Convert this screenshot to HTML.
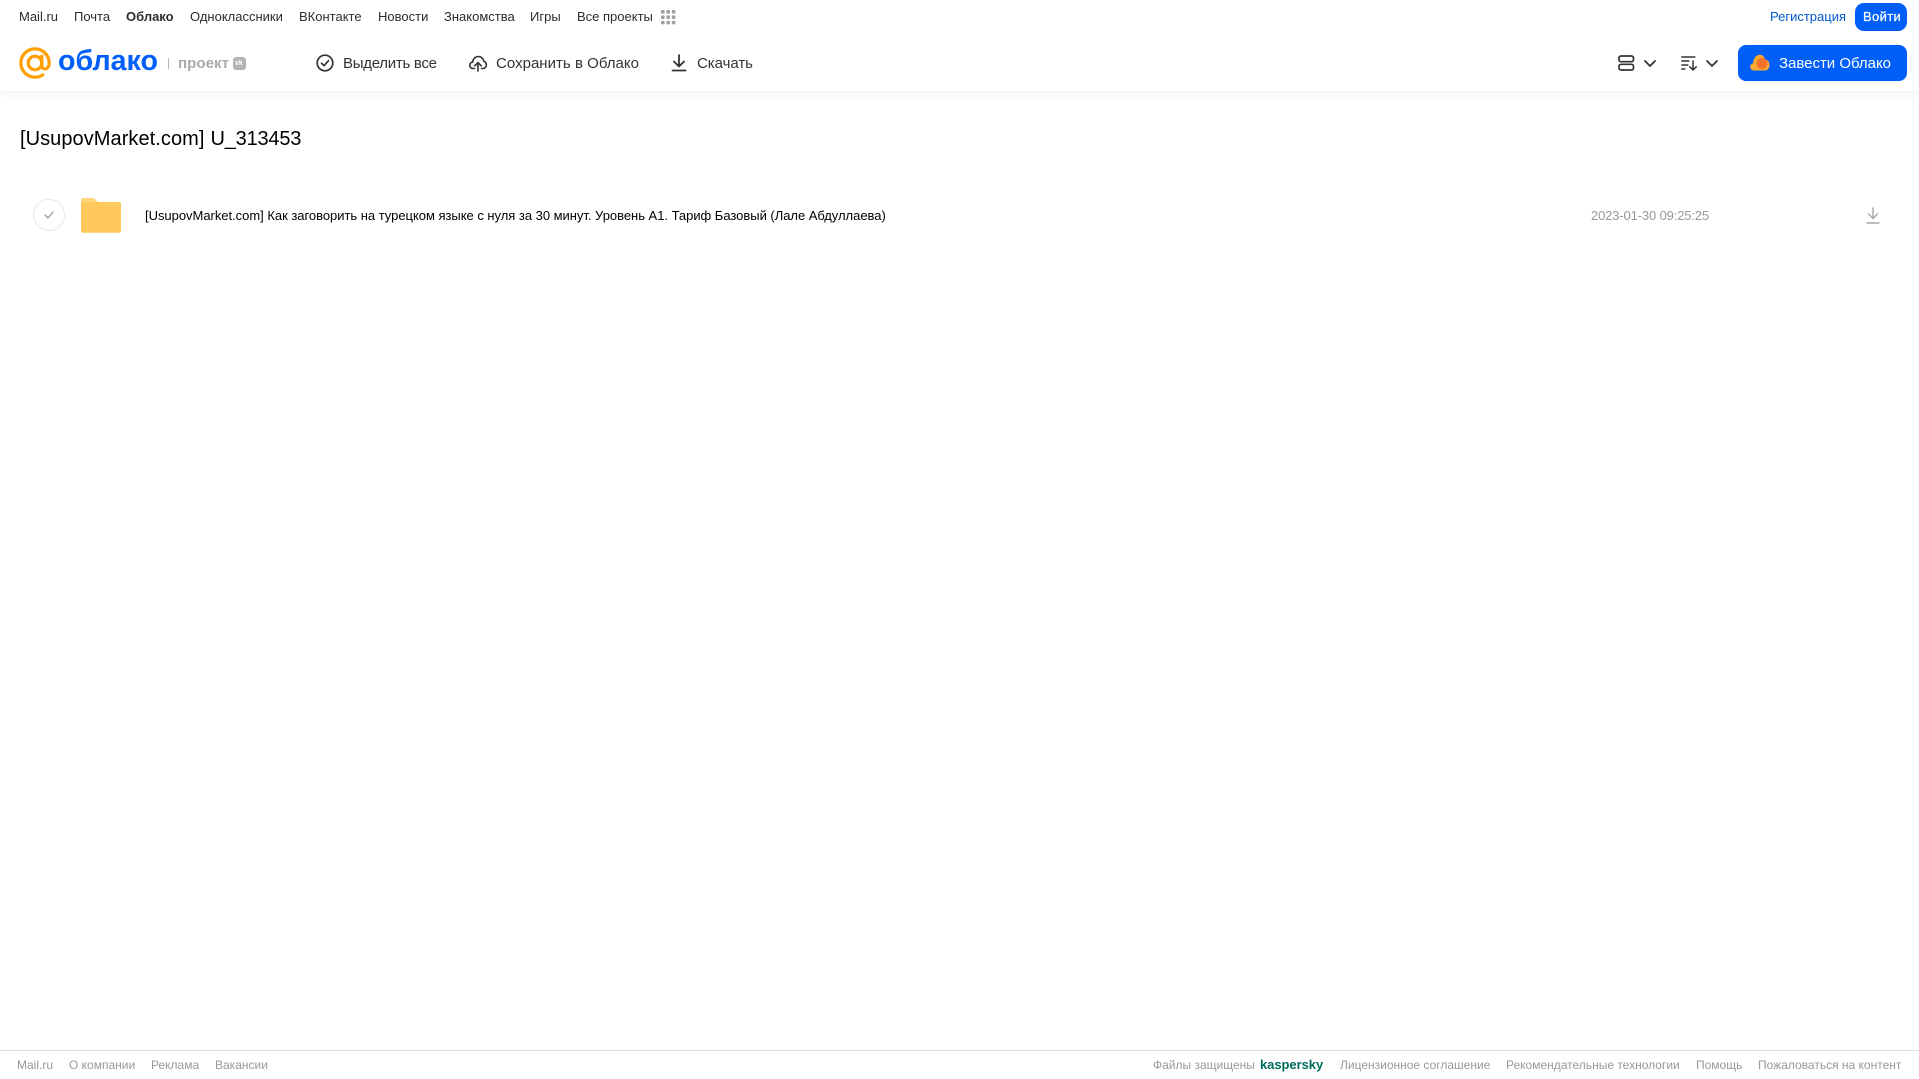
<!DOCTYPE html>
<html lang="ru">
<head>
<meta charset="utf-8">
<title>[UsupovMarket.com] U_313453</title>
<style>
html,body{margin:0;padding:0;background:#fff;width:1919px;height:1079px;overflow:hidden;font-family:"Liberation Sans",Arial,sans-serif}
.t{position:absolute;white-space:nowrap;line-height:20px;height:20px}
.n{font-size:13px;top:7px;color:#2c2d2e}
.f{font-size:12px;top:1055px;color:#999}
svg{position:absolute;overflow:visible}
svg text{font-family:"Liberation Sans",Arial,sans-serif}
#hdr{position:absolute;left:0;top:0;width:1919px;height:91px;background:#fff;box-shadow:0 2px 8px rgba(0,0,0,.07)}
</style>
</head>
<body>
<div id="hdr"></div>

<span class="t n" style="left:19px">Mail.ru</span>
<span class="t n" style="left:74px">Почта</span>
<span class="t n" style="left:126px;font-weight:bold">Облако</span>
<span class="t n" style="left:190px">Одноклассники</span>
<span class="t n" style="left:299px">ВКонтакте</span>
<span class="t n" style="left:378px">Новости</span>
<span class="t n" style="left:444px">Знакомства</span>
<span class="t n" style="left:530px">Игры</span>
<span class="t n" style="left:577px">Все проекты</span>
<svg style="left:661px;top:10px" width="15" height="15" viewBox="0 0 15 15" fill="#a0a0a0">
<rect x="0" y="0" width="3.6" height="3.6" rx="1"/><rect x="5.4" y="0" width="3.6" height="3.6" rx="1"/><rect x="10.8" y="0" width="3.6" height="3.6" rx="1"/>
<rect x="0" y="5.4" width="3.6" height="3.6" rx="1"/><rect x="5.4" y="5.4" width="3.6" height="3.6" rx="1"/><rect x="10.8" y="5.4" width="3.6" height="3.6" rx="1"/>
<rect x="0" y="10.8" width="3.6" height="3.6" rx="1"/><rect x="5.4" y="10.8" width="3.6" height="3.6" rx="1"/><rect x="10.8" y="10.8" width="3.6" height="3.6" rx="1"/>
</svg>

<span class="t n" style="left:1770px;color:#005bd1">Регистрация</span>
<div style="position:absolute;left:1855px;top:3px;width:52px;height:28px;border-radius:9px;background:#005ff9"></div>
<span class="t n" style="left:1863px;color:#fff;-webkit-text-stroke:.25px #fff;letter-spacing:.35px">Войти</span>

<!-- logo -->
<svg style="left:19px;top:47px" width="32" height="32" viewBox="0 0 33 33" fill="none">
<circle cx="16.5" cy="16.5" r="7" stroke="#ff9e00" stroke-width="3.300"/>
<path d="M23.5 9.5v9.5c0 5.2 7.6 5.2 7.6-2.5C31.100 8.300 24.500 1.900 16.500 1.900C8.400 1.900 1.900 8.400 1.900 16.500C1.900 24.600 8.400 31.100 16.500 31.100C19.600 31.100 22.200 30.300 24.500 28.800" stroke="#ff9e00" stroke-width="3.300" stroke-linecap="round"/>
</svg>
<svg style="left:0;top:0" width="1919" height="91">
<text x="58" y="70" font-size="29" font-weight="bold" fill="#005ff9" textLength="100" lengthAdjust="spacingAndGlyphs">облако</text>
<text x="178" y="68" font-size="15" font-weight="bold" fill="#aaa" textLength="51" lengthAdjust="spacingAndGlyphs">проект</text>
<text x="343" y="68" font-size="15" fill="#333" textLength="94">Выделить все</text>
<text x="496" y="68" font-size="15" fill="#333" textLength="143">Сохранить в Облако</text>
<text x="697" y="68" font-size="15" fill="#333" textLength="56">Скачать</text>
</svg>
<div style="position:absolute;left:168px;top:58px;width:1px;height:11px;background:#b5b5b5"></div>
<div style="position:absolute;left:233px;top:57px;width:13px;height:13px;border-radius:3px;background:#b3b3b3"></div>
<span class="t" style="left:235px;top:53.500px;font-size:7px;font-weight:bold;color:#fff">vk</span>

<!-- actions -->
<svg style="left:316px;top:54px" width="18" height="18" viewBox="0 0 18 18" fill="none" stroke="#333" stroke-width="1.700">
<circle cx="9" cy="9" r="7.800"/><path d="M5.500 9.200l2.500 2.500 4.500-5" stroke-linecap="round" stroke-linejoin="round"/>
</svg>

<svg style="left:469px;top:54px" width="18" height="18" viewBox="0 0 18 18" fill="none" stroke="#333" stroke-width="1.600" stroke-linecap="round" stroke-linejoin="round">
<path d="M5.500 14.500H4C2 14.500 .8 13 .8 11.300C.8 9.600 2 8.300 3.600 8.100C4 4.800 6.300 2.500 9.300 2.500C12.200 2.500 14.400 4.500 14.800 7.300C16.300 7.700 17.300 9.100 17.300 10.900C17.300 12.900 15.900 14.500 13.800 14.500H12.500"/>
<path d="M9 17V9M5.800 11.800L9 8.600l3.200 3.200"/>
</svg>

<svg style="left:671px;top:54px" width="16" height="18" viewBox="0 0 16 18" fill="none" stroke="#333" stroke-width="1.800" stroke-linecap="round" stroke-linejoin="round">
<path d="M8 1v11M3 7.500L8 12.500l5-5M1.500 16.500h13"/>
</svg>

<!-- view/sort -->
<svg style="left:1618px;top:55px" width="16" height="16" viewBox="0 0 16 16" fill="none" stroke="#333" stroke-width="1.700">
<rect x="1" y="1" width="14.500" height="5.700" rx="2"/><rect x="1" y="9.300" width="14.500" height="5.700" rx="2"/>
</svg>
<svg style="left:1644px;top:60px" width="12" height="7" viewBox="0 0 12 7" fill="none" stroke="#333" stroke-width="1.800" stroke-linecap="round" stroke-linejoin="round"><path d="M1 1l5 5 5-5"/></svg>
<svg style="left:1681px;top:55px" width="16" height="16" viewBox="0 0 16 16" fill="none" stroke="#333" stroke-width="1.500" stroke-linecap="round" stroke-linejoin="round">
<path d="M.8 2h13M.8 6h7M.8 10h6M.8 14h3M12 6v9M8.800 11.800L12 15l3.200-3.200"/>
</svg>
<svg style="left:1706px;top:60px" width="12" height="7" viewBox="0 0 12 7" fill="none" stroke="#333" stroke-width="1.800" stroke-linecap="round" stroke-linejoin="round"><path d="M1 1l5 5 5-5"/></svg>

<div style="position:absolute;left:1738px;top:45px;width:169px;height:36px;border-radius:8px;background:#005ff9"></div>
<svg style="left:1750px;top:54px" width="20" height="17" viewBox="0 0 20 17">
<path d="M4 16.500C1.700 16.500 .2 14.800 .2 12.800C.2 11 1.400 9.600 3 9.200C3.300 5.800 5.500 .8 9.500 .8C12.500 .8 14.500 3 15 5.500C17.500 5.800 19.500 7.800 19.500 11C19.500 14.300 17.500 16.500 14.500 16.500Z" fill="#ffa930"/>
<circle cx="12" cy="9.500" r="5.500" fill="#f4722b"/>
</svg>
<svg style="left:0;top:0" width="1919" height="91">
<text x="1779" y="68" font-size="15" fill="#fff" textLength="112">Завести Облако</text>
</svg>

<!-- title -->
<span class="t" style="left:20px;top:127px;font-size:20px;line-height:24px;height:24px;color:#000;letter-spacing:.06px">[UsupovMarket.com]</span>
<span class="t" style="left:210.500px;top:127px;font-size:20px;line-height:24px;height:24px;color:#000;letter-spacing:-.2px">U_313453</span>

<!-- row -->
<div style="position:absolute;left:33px;top:199px;width:30px;height:30px;border:1px solid #e8e8e8;border-radius:50%"></div>
<svg style="left:44px;top:211px" width="10" height="8" viewBox="0 0 10 8" fill="none" stroke="#999" stroke-width="1.300" stroke-linecap="round" stroke-linejoin="round"><path d="M1 4l3 3 5-6"/></svg>
<svg style="left:81px;top:198px" width="40" height="35" viewBox="0 0 40 35">
<path d="M2 0h9c1.500 0 2.500.6 3.500 1.600L16.500 4H38c1.100 0 2 .9 2 2v27c0 1.100-.9 2-2 2H2c-1.100 0-2-.9-2-2V2C0 .9.9 0 2 0z" fill="#ffd67c"/>
<path d="M0 6c0-1.100.9-2 2-2h36c1.100 0 2 .9 2 2V32c0 1.100-.9 2-2 2H2c-1.100 0-2-.9-2-2z" fill="#ffc95c"/>
</svg>
<span class="t" style="left:145px;top:206px;font-size:13px;color:#000;letter-spacing:-.025px">[UsupovMarket.com] Как заговорить на турецком языке с нуля за 30 минут. Уровень А1. Тариф Базовый (Лале Абдуллаева)</span>
<span class="t" style="left:1591px;top:206px;font-size:13px;color:#999;letter-spacing:-.14px">2023-01-30 09:25:25</span>
<svg style="left:1866px;top:207px" width="14" height="17" viewBox="0 0 14 17" fill="none" stroke="#a5a5a5" stroke-width="1.400" stroke-linecap="round" stroke-linejoin="round"><path d="M7 1v10.500M2.500 7L7 11.500 11.500 7M1 16h12"/></svg>

<!-- footer -->
<div style="position:absolute;left:0;top:1050px;width:1919px;height:1px;background:#ddd"></div>
<span class="t f" style="left:17px">Mail.ru</span>
<span class="t f" style="left:69px">О компании</span>
<span class="t f" style="left:151px">Реклама</span>
<span class="t f" style="left:215px">Вакансии</span>
<span class="t f" style="left:1153px">Файлы защищены</span>
<span class="t f" style="left:1260px;color:#006d5c;font-weight:bold;font-size:13px;letter-spacing:-.05px">kaspersky</span>
<span class="t f" style="left:1340px">Лицензионное соглашение</span>
<span class="t f" style="left:1506px">Рекомендательные технологии</span>
<span class="t f" style="left:1696px">Помощь</span>
<span class="t f" style="left:1758px">Пожаловаться на контент</span>
</body>
</html>
